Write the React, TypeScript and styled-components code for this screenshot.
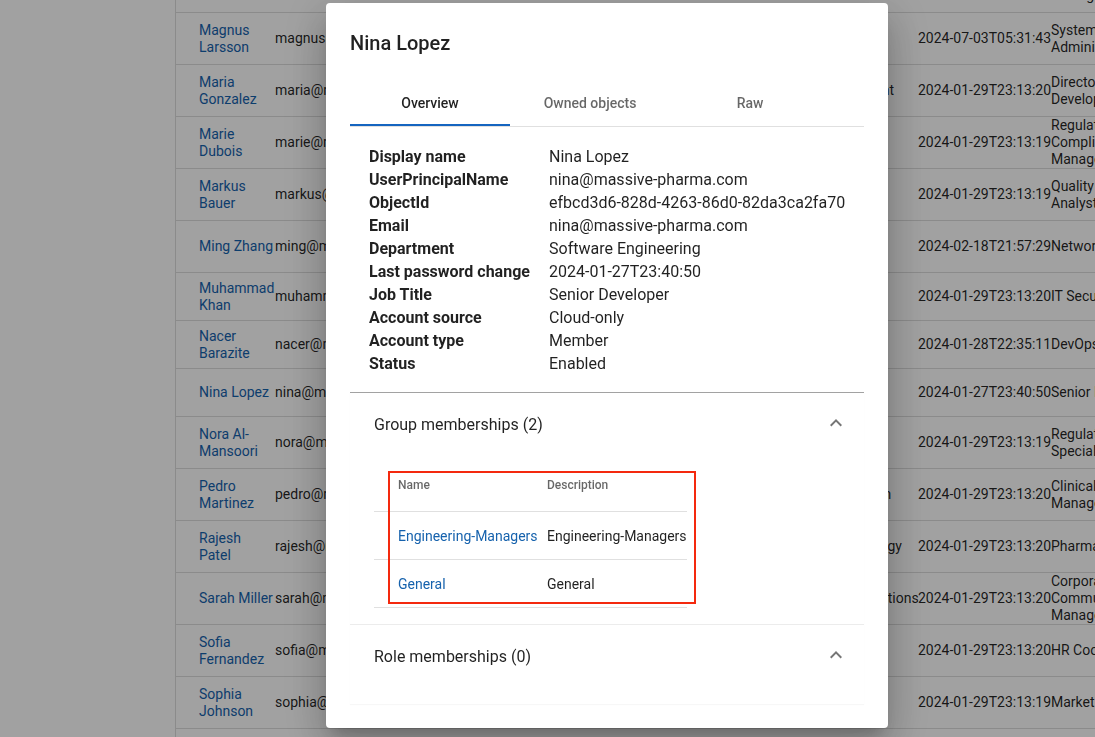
import React from 'react';
import styled, { createGlobalStyle } from 'styled-components';

type Person = {
  name: string;
  dept: string;
  ts: string;
  job: string[];
  height: number;
};

const people: Person[] = [
  { name: 'Lucas Wang', dept: 'Project Office', ts: '2024-01-29T23:13:20', job: ['Project', 'Manager'], height: 52 },
  { name: 'Magnus Larsson', dept: 'IT Operations', ts: '2024-07-03T05:31:43', job: ['System', 'Administrator'], height: 52 },
  { name: 'Maria Gonzalez', dept: 'Corporate Development', ts: '2024-01-29T23:13:20', job: ['Director of', 'Development'], height: 52 },
  { name: 'Marie Dubois', dept: 'Regulatory Affairs', ts: '2024-01-29T23:13:19', job: ['Regulatory', 'Compliance', 'Manager'], height: 52 },
  { name: 'Markus Bauer', dept: 'Quality Control', ts: '2024-01-29T23:13:19', job: ['Quality Assurance', 'Analyst'], height: 52 },
  { name: 'Ming Zhang', dept: 'IT Infrastructure', ts: '2024-02-18T21:57:29', job: ['Network Engineer'], height: 52 },
  { name: 'Muhammad Khan', dept: 'IT Security', ts: '2024-01-29T23:13:20', job: ['IT Security Lead'], height: 48 },
  { name: 'Nacer Barazite', dept: 'Platform', ts: '2024-01-28T22:35:11', job: ['DevOps Engineer'], height: 48 },
  { name: 'Nina Lopez', dept: 'Software Engineering', ts: '2024-01-27T23:40:50', job: ['Senior Developer'], height: 48 },
  { name: 'Nora Al-Mansoori', dept: 'Regulatory Affairs', ts: '2024-01-29T23:13:19', job: ['Regulatory Affairs', 'Specialist'], height: 52 },
  { name: 'Pedro Martinez', dept: 'Medical Administration', ts: '2024-01-29T23:13:20', job: ['Clinical Trial', 'Manager'], height: 52 },
  { name: 'Rajesh Patel', dept: 'Research and Toxicology', ts: '2024-01-29T23:13:20', job: ['Pharmacologist'], height: 52 },
  { name: 'Sarah Miller', dept: 'Corporate Communications', ts: '2024-01-29T23:13:20', job: ['Corporate', 'Communications', 'Manager'], height: 52 },
  { name: 'Sofia Fernandez', dept: 'Human Resources', ts: '2024-01-29T23:13:20', job: ['HR Coordinator'], height: 52 },
  { name: 'Sophia Johnson', dept: 'Marketing', ts: '2024-01-29T23:13:19', job: ['Marketing Manager'], height: 52 },
  { name: 'Thomas Becker', dept: 'Finance', ts: '2024-01-29T23:13:20', job: ['Controller'], height: 52 },
];

const properties: [string, string][] = [
  ['Display name', 'Nina Lopez'],
  ['UserPrincipalName', 'nina@massive-pharma.com'],
  ['ObjectId', 'efbcd3d6-828d-4263-86d0-82da3ca2fa70'],
  ['Email', 'nina@massive-pharma.com'],
  ['Department', 'Software Engineering'],
  ['Last password change', '2024-01-27T23:40:50'],
  ['Job Title', 'Senior Developer'],
  ['Account source', 'Cloud-only'],
  ['Account type', 'Member'],
  ['Status', 'Enabled'],
];

const groups = ['Engineering-Managers', 'General'];

const ExpandLess = () => (
  <svg width="24" height="24" viewBox="0 0 24 24">
    <path d="M7.41 15.41 12 10.83l4.59 4.58L18 14l-6-6-6 6z" fill="rgba(0,0,0,0.54)" />
  </svg>
);

const App = () => {
  return (
    <>
      <GlobalStyle />
      <Page>
        <Sidebar />
        <TableArea>
          <UserTable>
            {people.map((p) => (
              <UserRow key={p.name} $height={p.height}>
                <NameCell>{p.name}</NameCell>
                <Cell>{p.name.split(' ')[0].toLowerCase()}@massive-pharma.com</Cell>
                <NoWrapCell>{p.dept}</NoWrapCell>
                <NoWrapCell>{p.ts}</NoWrapCell>
                <Cell>
                  {p.job.map((line) => (
                    <JobLine key={line}>{line}</JobLine>
                  ))}
                </Cell>
              </UserRow>
            ))}
          </UserTable>
        </TableArea>
      </Page>

      <Backdrop>
        <Dialog>
          <DialogTitle>Nina Lopez</DialogTitle>
          <DialogContent>
            <TabList>
              <Tab $active>Overview</Tab>
              <Tab>Owned objects</Tab>
              <Tab>Raw</Tab>
            </TabList>

            <PropGrid>
              {properties.map(([label, value]) => (
                <React.Fragment key={label}>
                  <PropLabel>{label}</PropLabel>
                  <PropValue>{value}</PropValue>
                </React.Fragment>
              ))}
            </PropGrid>

            <Accordion $topLine="#a2a2a2">
              <Summary>
                <span>Group memberships (2)</span>
                <IconWrap>
                  <ExpandLess />
                </IconWrap>
              </Summary>
              <Details>
                <GroupTable>
                  <GroupRow>
                    <HeadCell $first>Name</HeadCell>
                    <HeadCell>Description</HeadCell>
                  </GroupRow>
                  {groups.map((g) => (
                    <GroupRow key={g}>
                      <GroupCell $first>
                        <GroupLink>{g}</GroupLink>
                      </GroupCell>
                      <GroupCell>{g}</GroupCell>
                    </GroupRow>
                  ))}
                </GroupTable>
                <Highlight />
              </Details>
            </Accordion>

            <Accordion $topLine="#ececec">
              <Summary>
                <span>Role memberships (0)</span>
                <IconWrap>
                  <ExpandLess />
                </IconWrap>
              </Summary>
              <EmptyDetails />
            </Accordion>
          </DialogContent>
        </Dialog>
      </Backdrop>
    </>
  );
};

const GlobalStyle = createGlobalStyle`
  html, body {
    margin: 0;
    padding: 0;
    background: #fff;
    overflow: hidden;
  }
  body {
    font-family: Roboto, "Liberation Sans", sans-serif;
    color: rgba(0, 0, 0, 0.87);
  }
`;

const Page = styled.div`
  display: flex;
  height: 100vh;
`;

const Sidebar = styled.div`
  width: 175px;
  flex-shrink: 0;
  border-right: 1px solid #dcdcdc;
`;

const TableArea = styled.div`
  flex: 1;
  overflow: hidden;
`;

const UserTable = styled.div`
  width: 1100px;
  margin-top: -39px;
`;

const UserRow = styled.div<{ $height: number }>`
  display: grid;
  grid-template-columns: 76px 472px 171px 133px 160px;
  align-items: center;
  box-sizing: border-box;
  height: ${(p) => p.$height}px;
  padding-left: 23px;
  border-bottom: 1px solid #dcdcdc;
  font-size: 14px;
  line-height: 17px;
`;

const Cell = styled.div`
  min-width: 0;
`;

const NameCell = styled(Cell)`
  color: #1662ad;
`;

const NoWrapCell = styled(Cell)`
  white-space: nowrap;
`;

const JobLine = styled.div`
  white-space: nowrap;
`;

const Backdrop = styled.div`
  position: fixed;
  inset: 0;
  background: rgba(0, 0, 0, 0.37);
  display: flex;
  align-items: flex-start;
  padding: 3px 0 0 326px;
`;

const Dialog = styled.div`
  width: 562px;
  background: #fff;
  border-radius: 4px;
  box-shadow: 0px 11px 15px -7px rgba(0, 0, 0, 0.2),
    0px 24px 38px 3px rgba(0, 0, 0, 0.14), 0px 9px 46px 8px rgba(0, 0, 0, 0.12);
`;

const DialogTitle = styled.h2`
  margin: 0;
  padding: 24px 24px 16px;
  font-size: 20px;
  font-weight: 500;
  line-height: 32px;
  color: rgba(0, 0, 0, 0.87);
`;

const DialogContent = styled.div`
  padding: 4px 24px 24px;
`;

const TabList = styled.div`
  display: grid;
  grid-template-columns: repeat(3, 160px);
  border-bottom: 1px solid #e0e0e0;
`;

const Tab = styled.div<{ $active?: boolean }>`
  height: 47px;
  box-sizing: border-box;
  display: flex;
  align-items: center;
  justify-content: center;
  font-size: 14px;
  font-weight: 500;
  color: ${(p) => (p.$active ? 'rgba(0,0,0,0.87)' : 'rgba(0,0,0,0.6)')};
  border-bottom: 2px solid ${(p) => (p.$active ? '#1565c0' : 'transparent')};
  padding-top: 2px;
`;

const PropGrid = styled.div`
  display: grid;
  grid-template-columns: 180px 1fr;
  padding: 18px 0 17px 19px;
  font-size: 16px;
  line-height: 23px;
`;

const PropLabel = styled.div`
  font-weight: 700;
`;

const PropValue = styled.div``;

const Accordion = styled.div<{ $topLine: string }>`
  background: #fff;
  border-top: 1px solid ${(p) => p.$topLine};
  box-shadow: 0px 1px 1px 0px rgba(0, 0, 0, 0.03);
`;

const Summary = styled.div`
  height: 63px;
  display: flex;
  align-items: center;
  justify-content: space-between;
  padding: 0 16px 0 24px;
  font-size: 16px;
`;

const IconWrap = styled.div`
  display: flex;
  margin-top: -4px;
`;

const Details = styled.div`
  position: relative;
  padding: 8px 16px 16px 24px;
`;

const EmptyDetails = styled.div`
  height: 16px;
`;

const GroupTable = styled.div`
  width: max-content;
`;

const GroupRow = styled.div`
  display: grid;
  grid-template-columns: 173px max-content;
  align-items: center;
  height: 48px;
  box-sizing: border-box;
  border-bottom: 1px solid #e0e0e0;
  font-size: 14px;
`;

const HeadCell = styled.div<{ $first?: boolean }>`
  padding-left: ${(p) => (p.$first ? '24px' : '0')};
  padding-bottom: 6px;
  font-size: 12px;
  font-weight: 500;
  color: rgba(0, 0, 0, 0.6);
`;

const GroupCell = styled.div<{ $first?: boolean }>`
  padding-left: ${(p) => (p.$first ? '24px' : '0')};
  color: rgba(0, 0, 0, 0.87);
`;

const GroupLink = styled.span`
  color: #1662ad;
`;

const Highlight = styled.div`
  position: absolute;
  left: 38px;
  top: 15px;
  width: 308px;
  height: 133px;
  box-sizing: border-box;
  border: 2px solid #f4290e;
  pointer-events: none;
`;

export default App;
